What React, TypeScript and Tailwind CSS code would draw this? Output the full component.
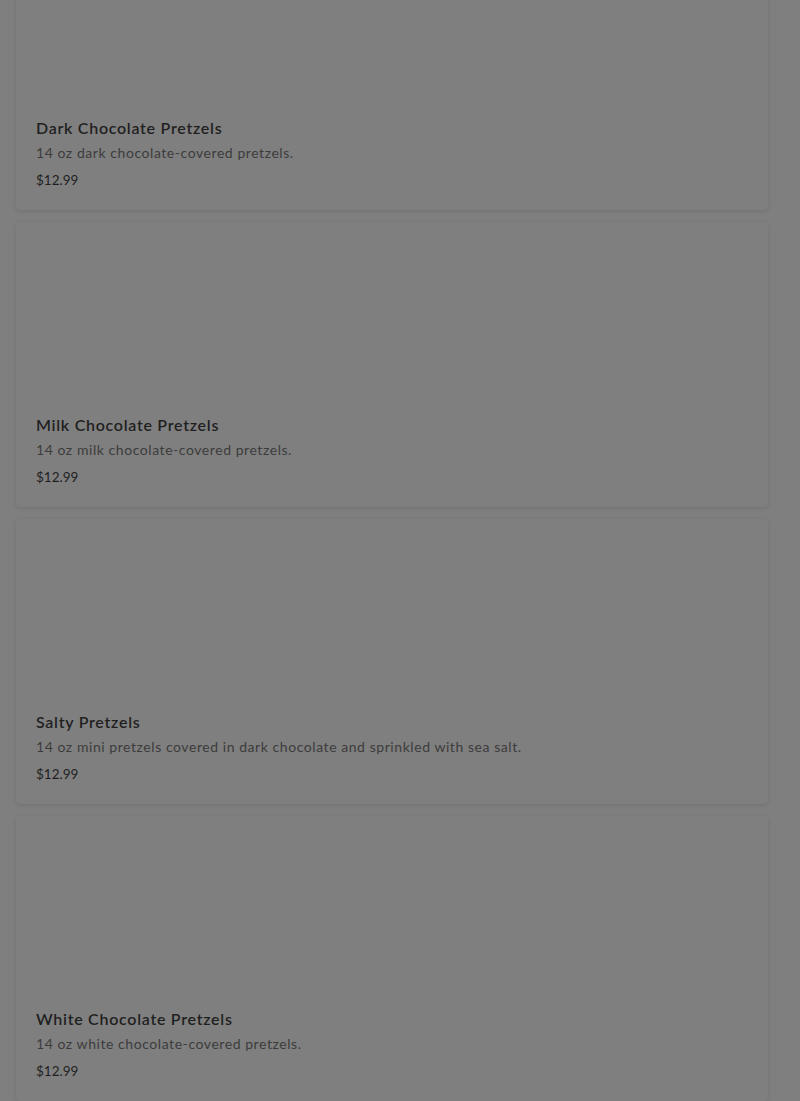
import React from "react";

const items = [
  { name: "Dark Chocolate Pretzels", desc: "14 oz dark chocolate-covered pretzels.", price: "$12.99" },
  { name: "Milk Chocolate Pretzels", desc: "14 oz milk chocolate-covered pretzels.", price: "$12.99" },
  { name: "Salty Pretzels", desc: "14 oz mini pretzels covered in dark chocolate and sprinkled with sea salt.", price: "$12.99" },
  { name: "White Chocolate Pretzels", desc: "14 oz white chocolate-covered pretzels.", price: "$12.99" },
];

export default function App() {
  return (
    <div
      className="h-[1101px] w-[800px] overflow-hidden bg-[#7f7f7f]"
      style={{ fontFamily: "Lato, 'Open Sans', sans-serif" }}
    >
      <div className="-mt-[75px] flex flex-col gap-3 pl-4 w-[768px]">
        {items.map((it) => (
          <div
            key={it.name}
            className="h-[285px] w-[752px] shrink-0 rounded-[4px] bg-[#7f7f7f] shadow-[0_1px_4px_rgba(0,0,0,0.12)]"
          >
            <div className="h-[175px]" />
            <div className="px-5 pt-4">
              <div className="text-[16px] leading-6 font-semibold tracking-[0.045em] text-[#1f1f1f]">{it.name}</div>
              <div className="mt-[3px] text-[14px] leading-5 tracking-[0.04em] text-[#3c3c3c]">{it.desc}</div>
              <div className="mt-[7px] text-[13.5px] leading-5 text-[#1f1f1f]">{it.price}</div>
            </div>
          </div>
        ))}
      </div>
    </div>
  );
}
